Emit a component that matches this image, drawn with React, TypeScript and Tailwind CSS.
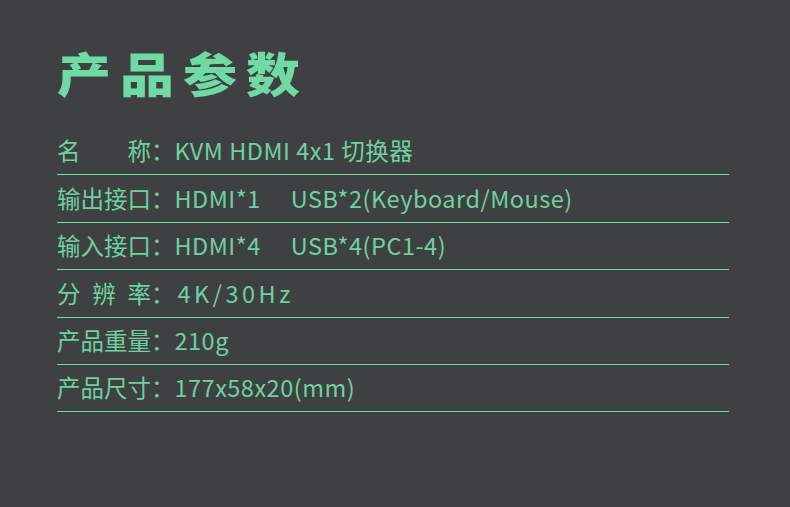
const font = { fontFamily: '"Noto Sans CJK SC", "Noto Sans", sans-serif' };

type Row = {
    label: string[];
    value: React.ReactNode;
    h: string;
    spaced?: boolean;
};

const rows: Row[] = [
    { label: ['名', '称'], value: 'KVM HDMI 4x1 切换器', h: 'h-[48px]' },
    {
        label: ['输', '出', '接', '口'],
        value: (
            <>
                HDMI*1<span className="ml-[30px]">USB*2(Keyboard/Mouse)</span>
            </>
        ),
        h: 'h-[48px]',
    },
    {
        label: ['输', '入', '接', '口'],
        value: (
            <>
                HDMI*4<span className="ml-[30px]">USB*4(PC1-4)</span>
            </>
        ),
        h: 'h-[47px]',
    },
    { label: ['分', '辨', '率'], value: '4K/30Hz', h: 'h-[48px]', spaced: true },
    { label: ['产', '品', '重', '量'], value: '210g', h: 'h-[47px]' },
    { label: ['产', '品', '尺', '寸'], value: '177x58x20(mm)', h: 'h-[47px]' },
];

export default function App() {
    return (
        <div className="w-[790px] h-[507px] bg-[#3f4042] pl-[57px] pr-[61px] pt-[40px]" style={font}>
            {/* 标题 */}
            <h1 className="h-[87px] text-[54px] leading-[60px] font-black tracking-[9px] text-[#70daa5] scale-y-[0.86] origin-center">
                产品参数
            </h1>

            {/* 参数列表 */}
            <div>
                {rows.map((row, i) => (
                    <div
                        key={i}
                        className={`${row.h} flex items-center border-b border-[#6fdba5] text-[23.5px] text-[#6dd29f]`}
                    >
                        <div className="w-[94px] flex justify-between">
                            {row.label.map((c) => (
                                <span key={c}>{c}</span>
                            ))}
                        </div>
                        <span>：</span>
                        <span className={row.spaced ? 'tracking-[3.5px] ml-[3px]' : 'tracking-[0.5px]'}>{row.value}</span>
                    </div>
                ))}
            </div>
        </div>
    );
}
